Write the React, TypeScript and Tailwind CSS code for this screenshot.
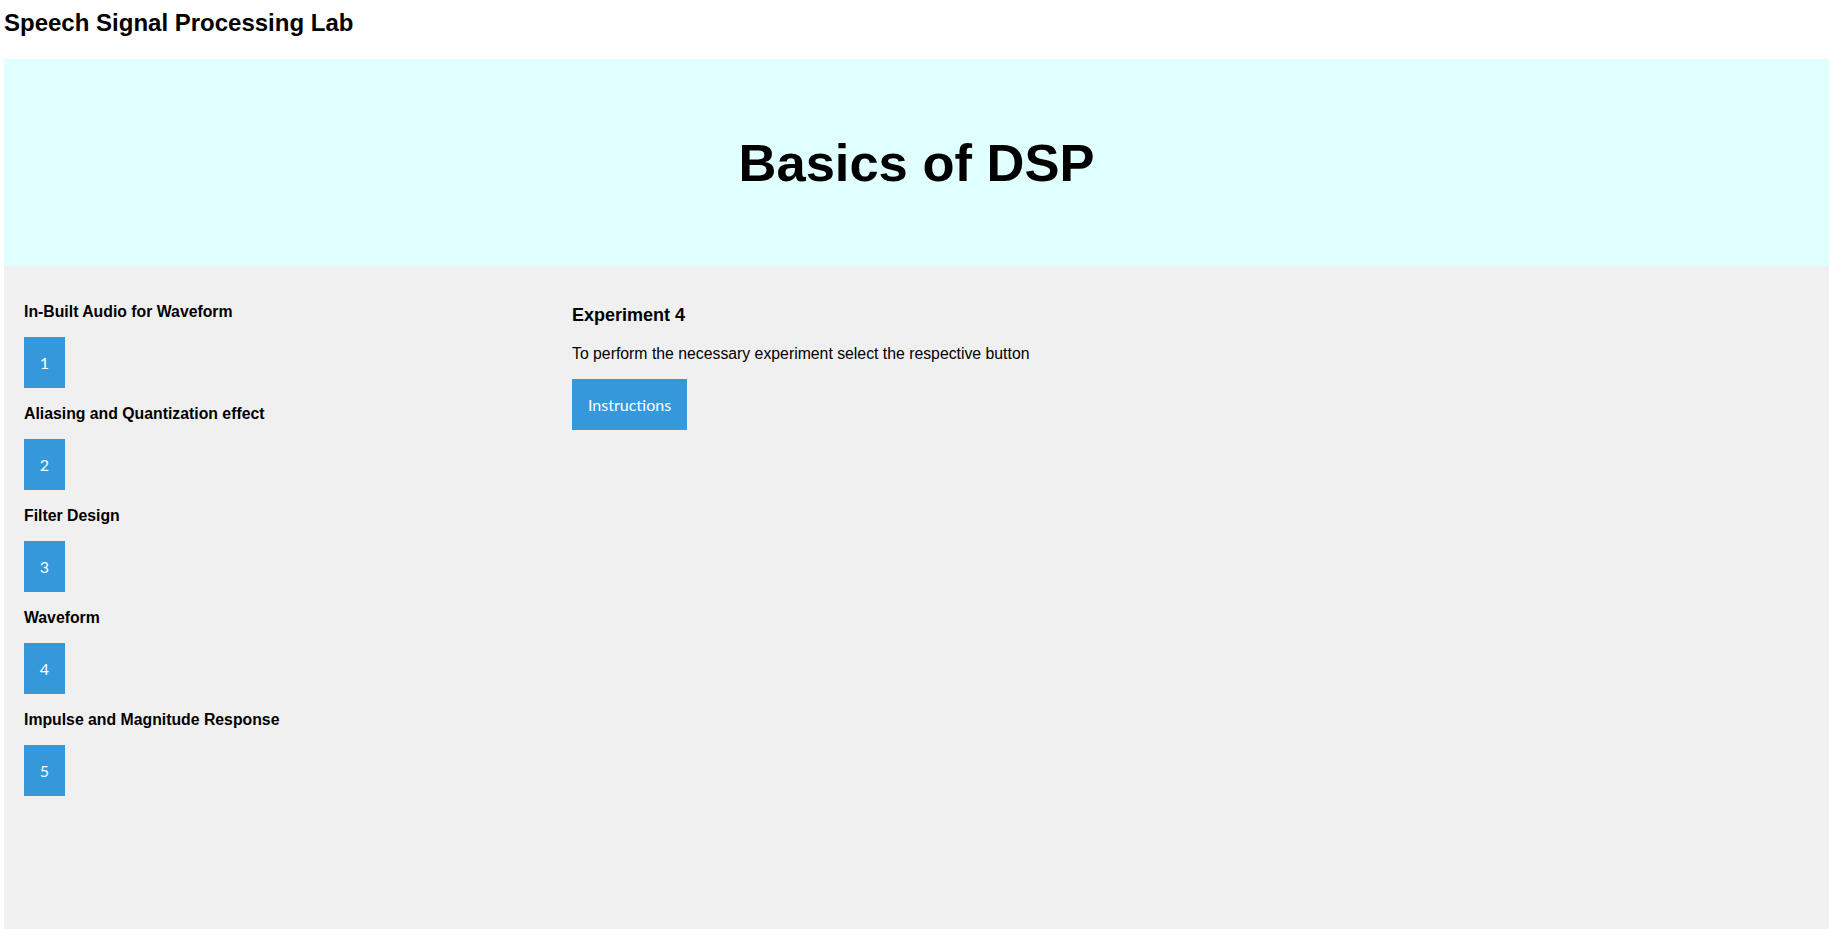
const experiments = [
  { id: 1, title: 'In-Built Audio for Waveform' },
  { id: 2, title: 'Aliasing and Quantization effect' },
  { id: 3, title: 'Filter Design' },
  { id: 4, title: 'Waveform' },
  { id: 5, title: 'Impulse and Magnitude Response' },
];

const btn =
  'flex items-center justify-center h-[51px] bg-[#3498db] text-white text-[16px] leading-[19px] font-["Lato",sans-serif]';

export default function App() {
  return (
    <div className="min-h-screen flex flex-col bg-white pl-[4px] pr-[1px] font-['Liberation_Sans',Arial,sans-serif] text-black">
      <h1 className="mt-[9px] mb-[22px] text-[24px] leading-[28px] font-bold">Speech Signal Processing Lab</h1>

      <header className="h-[207px] bg-[#e0ffff] flex items-center justify-center">
        <h2 className="text-[52.5px] leading-[62px] font-bold">Basics of DSP</h2>
      </header>

      <main className="flex-1 bg-[#f0f0f0] flex">
        <aside className="w-[568px] pl-5 pt-[37px]">
          {experiments.map((e) => (
            <div key={e.id} className="mb-[17px]">
              <h3 className="text-[15.8px] leading-[18px] font-bold">{e.title}</h3>
              <button className={`mt-[16px] w-[41px] ${btn}`}>{e.id}</button>
            </div>
          ))}
        </aside>

        <section className="pt-[38px]">
          <h3 className="text-[18px] leading-[22px] font-bold">Experiment 4</h3>
          <p className="mt-[19px] text-[15.8px] leading-[18px]">
            To perform the necessary experiment select the respective button
          </p>
          <button className={`mt-[16px] px-4 ${btn}`}>Instructions</button>
        </section>
      </main>
    </div>
  );
}
